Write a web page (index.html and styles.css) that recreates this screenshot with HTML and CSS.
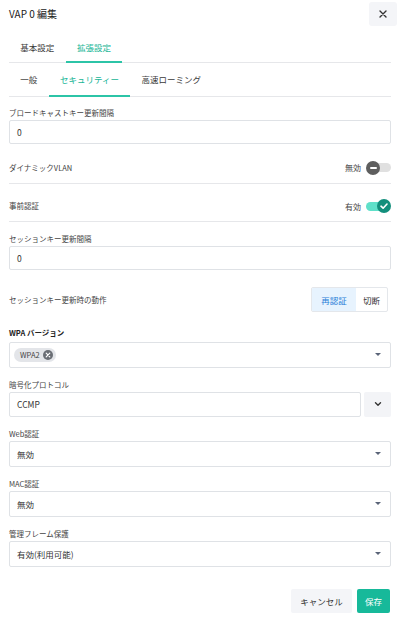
FILE: index.html
```html
<!DOCTYPE html>
<html lang="ja">
<head>
<meta charset="utf-8">
<link rel="stylesheet" href="styles.css">
</head>
<body>
<div class="dialog">
  <div class="header">
    <div class="title">VAP 0 編集</div>
    <button class="close" aria-label="close">
      <svg width="8" height="8" viewBox="0 0 8 8"><path d="M1 1L7 7M7 1L1 7" stroke="#333" stroke-width="1.4" stroke-linecap="round"/></svg>
    </button>
  </div>

  <div class="tabs tabs-main">
    <div class="tab">基本設定</div>
    <div class="tab active">拡張設定</div>
  </div>
  <div class="tabs tabs-sub">
    <div class="tab">一般</div>
    <div class="tab active">セキュリティー</div>
    <div class="tab">高速ローミング</div>
  </div>

  <div class="form">
    <div class="field first">
      <div class="label">ブロードキャストキー更新間隔</div>
      <div class="input">0</div>
    </div>

    <div class="toggle-row first-toggle">
      <div class="label">ダイナミックVLAN</div>
      <div class="toggle-wrap">
        <span class="toggle-text">無効</span>
        <span class="toggle off">
          <span class="track"></span>
          <span class="knob"><span class="minus"></span></span>
        </span>
      </div>
    </div>

    <div class="toggle-row">
      <div class="label">事前認証</div>
      <div class="toggle-wrap">
        <span class="toggle-text">有効</span>
        <span class="toggle on">
          <span class="track"></span>
          <span class="knob">
            <svg width="10" height="10" viewBox="0 0 10 10"><path d="M2 5.2L4.1 7.2L8 3" fill="none" stroke="#fff" stroke-width="1.6" stroke-linecap="round" stroke-linejoin="round"/></svg>
          </span>
        </span>
      </div>
    </div>

    <div class="field">
      <div class="label">セッションキー更新間隔</div>
      <div class="input">0</div>
    </div>

    <div class="seg-row">
      <div class="label">セッションキー更新時の動作</div>
      <div class="segmented">
        <span class="seg active">再認証</span>
        <span class="seg">切断</span>
      </div>
    </div>

    <div class="field wpa">
      <div class="label strong">WPA バージョン</div>
      <div class="select">
        <span class="chip">WPA2
          <span class="chip-x"><svg width="6" height="6" viewBox="0 0 6 6"><path d="M1.2 1.2L4.8 4.8M4.8 1.2L1.2 4.8" stroke="#fff" stroke-width="1.2" stroke-linecap="round"/></svg></span>
        </span>
        <span class="caret"></span>
      </div>
    </div>

    <div class="field">
      <div class="label">暗号化プロトコル</div>
      <div class="combo">
        <div class="input grow">CCMP</div>
        <button class="combo-btn" aria-label="open">
          <svg width="8" height="6" viewBox="0 0 8 6"><path d="M1.5 1.8L4 4.2L6.5 1.8" fill="none" stroke="#333" stroke-width="1.4" stroke-linecap="round" stroke-linejoin="round"/></svg>
        </button>
      </div>
    </div>

    <div class="field">
      <div class="label">Web認証</div>
      <div class="select">無効<span class="caret"></span></div>
    </div>

    <div class="field">
      <div class="label">MAC認証</div>
      <div class="select">無効<span class="caret"></span></div>
    </div>

    <div class="field">
      <div class="label">管理フレーム保護</div>
      <div class="select">有効(利用可能)<span class="caret"></span></div>
    </div>
  </div>

  <div class="footer">
    <button class="btn cancel">キャンセル</button>
    <button class="btn save">保存</button>
  </div>
</div>
</body>
</html>
```

FILE: styles.css
```css
* { box-sizing: border-box; }
html, body {
  margin: 0;
  padding: 0;
  background: #fff;
}
body {
  font-family: "Noto Sans CJK JP", "Noto Sans", sans-serif;
  color: #333;
  width: 398px;
  height: 617px;
  overflow: hidden;
}
button {
  font-family: inherit;
  border: none;
  padding: 0;
  margin: 0;
  cursor: pointer;
}
.dialog {
  padding: 0 7px 0 9px;
}
.header {
  display: flex;
  align-items: center;
  justify-content: space-between;
  height: 28px;
  margin-right: -6px;
}
.title {
  font-size: 10px;
  line-height: 14px;
  color: #222;
}
.close {
  width: 28px;
  height: 24px;
  background: #f4f5f8;
  border-radius: 3px;
  display: flex;
  align-items: center;
  justify-content: center;
}
.tabs {
  display: flex;
  border-bottom: 1px solid #e6e7ea;
}
.tabs-main {
  padding-top: 5px;
}
.tab {
  font-size: 8.5px;
  padding: 0 11.3px;
  display: flex;
  align-items: center;
  color: #3a3a3a;
  border-bottom: 2px solid transparent;
  margin-bottom: -1px;
}
.tabs-main .tab { height: 30px; }
.tabs-sub .tab { height: 34px; }
.tab.active {
  color: #17b596;
  border-bottom-color: #2cc4a7;
}
.label {
  font-size: 7.5px;
  line-height: 12px;
  color: #444;
}
.label.strong {
  font-weight: 700;
  color: #222;
}
.field {
  margin-top: 11px;
}
.field.first { margin-top: 10px; }
.field.wpa { margin-top: 15px; }
.field .label { margin-bottom: 1px; }
.field.wpa .label { margin-bottom: 2.5px; }
.input {
  height: 24px;
  border: 1px solid #dfe2e6;
  border-radius: 2px;
  font-size: 8.5px;
  padding: 0 7px;
  display: flex;
  align-items: center;
  color: #333;
}
.select {
  height: 26px;
  border: 1px solid #dfe2e6;
  border-radius: 2px;
  font-size: 8.5px;
  padding: 0 9px 0 7px;
  display: flex;
  align-items: center;
  color: #333;
}
.select .caret {
  margin-left: auto;
  width: 0;
  height: 0;
  border-left: 3px solid transparent;
  border-right: 3px solid transparent;
  border-top: 3.5px solid #5a6478;
}
.wpa .select { padding-left: 4px; }
.chip {
  display: inline-flex;
  align-items: center;
  height: 14px;
  border-radius: 7px;
  background: #e3e5e9;
  font-size: 7.5px;
  padding: 0 3px 0 6px;
  gap: 3px;
  color: #444;
}
.chip-x {
  width: 10px;
  height: 10px;
  border-radius: 50%;
  background: #6a6e75;
  display: flex;
  align-items: center;
  justify-content: center;
}
.combo {
  display: flex;
  gap: 3px;
}
.combo .grow { flex: 1; height: 25px; }
.combo-btn {
  width: 27px;
  height: 25px;
  background: #f3f4f7;
  border-radius: 2px;
  display: flex;
  align-items: center;
  justify-content: center;
}
.toggle-row {
  display: flex;
  align-items: center;
  justify-content: space-between;
  height: 16px;
  padding-bottom: 7px;
  box-sizing: content-box;
  border-bottom: 1px solid #e6e7ea;
  margin-top: 14.5px;
}
.toggle-row.first-toggle { margin-top: 15.5px; }
.toggle-wrap {
  display: flex;
  align-items: center;
  gap: 5px;
}
.toggle-text {
  font-size: 8px;
  color: #444;
}
.toggle {
  position: relative;
  width: 25px;
  height: 14px;
  display: block;
}
.toggle .track {
  position: absolute;
  left: 2px;
  right: 0;
  top: 2.5px;
  height: 9px;
  border-radius: 5px;
}
.toggle.off .track { background: #e0e0e0; }
.toggle.on .track { background: #5fe0c9; left: 0; right: 2px; }
.toggle .knob {
  position: absolute;
  top: 0;
  width: 14px;
  height: 14px;
  border-radius: 50%;
  display: flex;
  align-items: center;
  justify-content: center;
}
.toggle.off .knob { left: 0; background: #5e5e5e; }
.toggle.on .knob { right: 0; background: #138f7c; }
.minus {
  width: 7px;
  height: 2px;
  background: #fff;
  border-radius: 1px;
}
.seg-row {
  display: flex;
  align-items: center;
  justify-content: space-between;
  margin-top: 17px;
  padding-right: 3px;
}
.segmented {
  display: flex;
  height: 25px;
  border: 1px solid #e4e7eb;
  border-radius: 2px;
  overflow: hidden;
}
.seg {
  font-size: 8.5px;
  display: flex;
  align-items: center;
  justify-content: center;
  color: #333;
  width: 31px;
}
.seg.active {
  width: 44px;
  background: #e7f3fe;
  color: #2b7fd8;
}
.footer {
  display: flex;
  justify-content: flex-end;
  gap: 5px;
  margin-top: 22px;
  padding-right: 1px;
}
.btn {
  height: 24px;
  font-size: 8.5px;
  padding: 0 8px;
  border-radius: 2px;
}
.btn.cancel {
  background: #f4f5f8;
  color: #333;
  width: 61px;
}
.btn.save {
  background: #17b99a;
  color: #fff;
  width: 33px;
}
```
